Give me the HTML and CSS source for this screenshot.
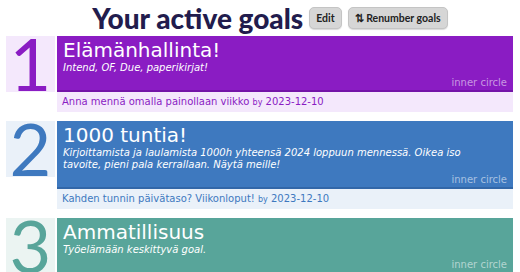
FILE: index.html
```html
<!DOCTYPE html>
<html lang="fi">
<head>
  <meta charset="UTF-8" />
  <title>Your active goals</title>
  <link rel="stylesheet" href="styles.css">
</head>
<body>
  <div class="header">
    <h1>Your active goals</h1>
    <button class="btn">Edit</button>
    <button class="btn"><span class="sort-icon">&#8645;</span> Renumber goals</button>
  </div>

  <div class="goals">
    <div class="goal goal-purple">
      <div class="goal-number">1</div>
      <div class="goal-body">
        <div class="goal-main">
          <div class="goal-title">Elämänhallinta!</div>
          <div class="goal-desc">Intend, OF, Due, paperikirjat!</div>
          <div class="goal-circle">inner circle</div>
        </div>
        <div class="goal-sub">Anna mennä omalla painollaan viikko <small>by</small> 2023-12-10</div>
      </div>
    </div>

    <div class="goal goal-blue">
      <div class="goal-number">2</div>
      <div class="goal-body">
        <div class="goal-main">
          <div class="goal-title">1000 tuntia!</div>
          <div class="goal-desc">Kirjoittamista ja laulamista 1000h yhteensä 2024 loppuun mennessä. Oikea iso tavoite, pieni pala kerrallaan. Näytä meille!</div>
          <div class="goal-circle">inner circle</div>
        </div>
        <div class="goal-sub">Kahden tunnin päivätaso? Viikonloput! <small>by</small> 2023-12-10</div>
      </div>
    </div>

    <div class="goal goal-teal">
      <div class="goal-number">3</div>
      <div class="goal-body">
        <div class="goal-main">
          <div class="goal-title">Ammatillisuus</div>
          <div class="goal-desc">Työelämään keskittyvä goal.</div>
          <div class="goal-circle">inner circle</div>
        </div>
      </div>
    </div>
  </div>
</body>
</html>
```

FILE: styles.css
```css
body {
  font-family: "DejaVu Sans", sans-serif;
  margin: 0;
  padding: 0;
  background-color: #ffffff;
}
.header {
  display: flex;
  align-items: center;
  justify-content: center;
  gap: 6px;
  height: 36px;
  padding-left: 20px;
}
.header h1 {
  margin: 0;
  font-family: "Lato", sans-serif;
  font-weight: 900;
  font-size: 28px;
  color: #221c4d;
  line-height: 36px;
}
.btn {
  font-family: "Lato", sans-serif;
  font-weight: 700;
  font-size: 10.5px;
  color: #222;
  background-color: #d6d6d6;
  border: 1px solid #c4c4c4;
  border-radius: 5px;
  box-shadow: 0 1px 1px rgba(0, 0, 0, 0.15);
  height: 22px;
  padding: 0 6px;
}
.sort-icon {
  font-weight: 700;
}
.goals {
  padding: 0 7px 0 6px;
}
.goal {
  display: flex;
  align-items: flex-start;
  gap: 2px;
  margin-bottom: 9px;
}
.goal-number {
  width: 49px;
  height: 56px;
  flex-shrink: 0;
  font-family: "Lato", sans-serif;
  font-size: 72px;
  line-height: 54px;
  text-align: center;
}
.goal-body {
  flex: 1;
}
.goal-main {
  color: white;
  padding: 2px 6px 0 6px;
  border-bottom: 2px solid;
}
.goal-title {
  font-size: 20px;
  line-height: 24px;
}
.goal-desc {
  font-style: italic;
  font-size: 10px;
  line-height: 12px;
  padding: 0 20px 2px 0;
}
.goal-circle {
  text-align: right;
  font-size: 10px;
  line-height: 14px;
  color: rgba(255, 255, 255, 0.55);
}
.goal-sub {
  font-size: 10px;
  line-height: 19px;
  padding-left: 5px;
}
.goal-sub small {
  font-size: 8px;
}

.goal-purple .goal-number,
.goal-purple .goal-sub {
  background-color: #f4e8fc;
  color: #8a1cc3;
}
.goal-purple .goal-main {
  background-color: #8a1cc3;
  border-color: #7414a8;
}
.goal-blue .goal-number,
.goal-blue .goal-sub {
  background-color: #eaf1f9;
  color: #3e79bf;
}
.goal-blue .goal-main {
  background-color: #3e79bf;
  border-color: #3267a8;
}
.goal-teal .goal-number,
.goal-teal .goal-sub {
  background-color: #ebf4f2;
  color: #58a59a;
}
.goal-teal .goal-main {
  background-color: #58a59a;
  border-color: #4a9186;
}
```
